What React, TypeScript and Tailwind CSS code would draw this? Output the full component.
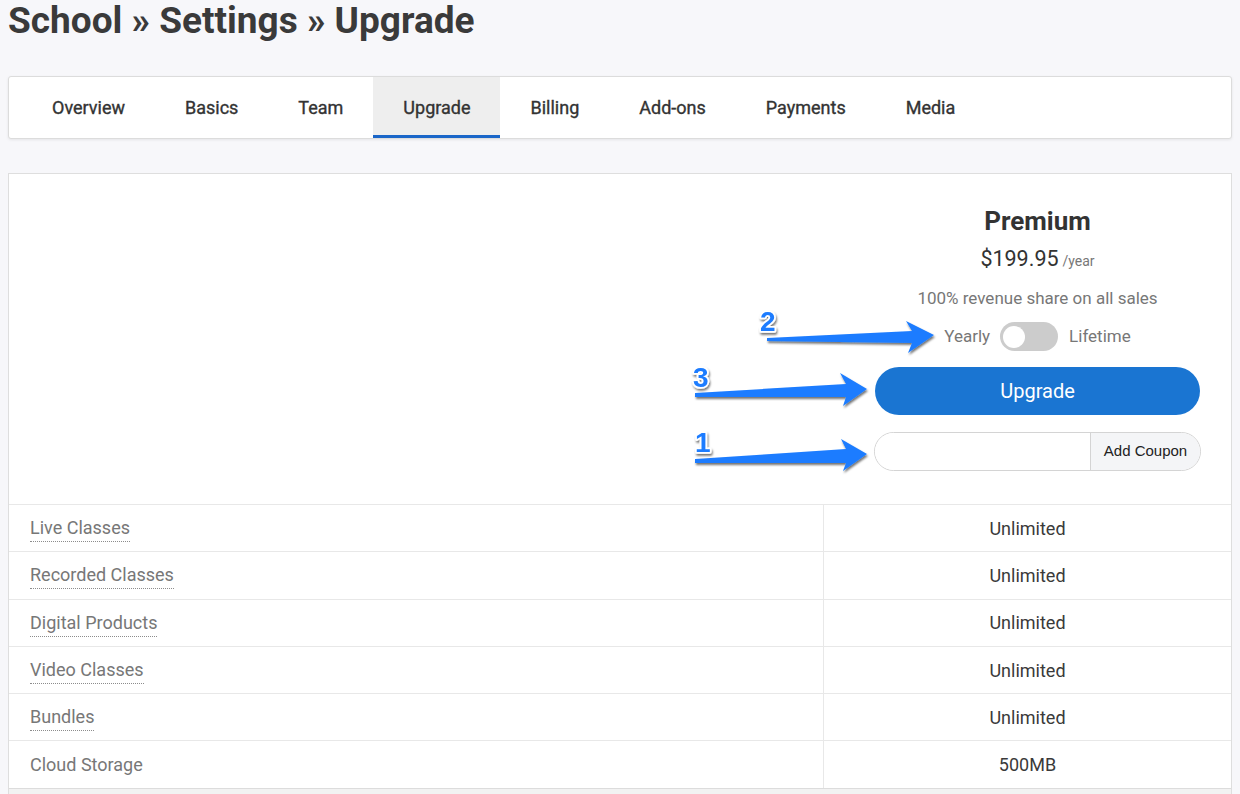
import { useState } from 'react'

const tabs = ['Overview', 'Basics', 'Team', 'Upgrade', 'Billing', 'Add-ons', 'Payments', 'Media']

const features = [
  { name: 'Live Classes', value: 'Unlimited', tip: true },
  { name: 'Recorded Classes', value: 'Unlimited', tip: true },
  { name: 'Digital Products', value: 'Unlimited', tip: true },
  { name: 'Video Classes', value: 'Unlimited', tip: true },
  { name: 'Bundles', value: 'Unlimited', tip: true },
  { name: 'Cloud Storage', value: '500MB', tip: false },
]

// annotation arrows drawn over the screenshot
function Annotations() {
  return (
    <svg
      className="pointer-events-none absolute left-0 top-0"
      width="1240"
      height="794"
      viewBox="0 0 1240 794"
    >
      <defs>
        <filter id="sh" x="-10%" y="-30%" width="120%" height="160%">
          <feDropShadow dx="1" dy="2" stdDeviation="1.2" floodColor="#000" floodOpacity="0.55" />
        </filter>
      </defs>
      <g fill="#1c7cff" filter="url(#sh)">
        <path d="M767,338 L912,331 L906,321 L934,335 L908,353 L912,343 L767,341 Z" />
        <path d="M695,393 L846,384 L840,373 L867,389 L843,406 L846,397 L695,397 Z" />
        <path d="M695,459 L846,449 L841,439 L867,454 L843,471 L846,463 L695,463 Z" />
      </g>
      <g
        fill="#1c7cff"
        stroke="#fff"
        strokeWidth="3.5"
        strokeLinejoin="round"
        filter="url(#sh)"
        style={{ paintOrder: 'stroke', fontFamily: '"Liberation Sans", Arial, sans-serif' }}
        fontWeight="bold"
        fontSize="28"
      >
        <text x="760" y="331">2</text>
        <text x="693" y="387">3</text>
        <text x="695" y="452">1</text>
      </g>
    </svg>
  )
}

export default function App() {
  const [lifetime, setLifetime] = useState(false)
  const [coupon, setCoupon] = useState('')

  return (
    <div
      className="relative min-h-screen bg-[#f7f7fa] px-2 text-[#333]"
      style={{ fontFamily: 'Roboto, "Liberation Sans", sans-serif' }}
    >
      <h1 className="pt-[2px] text-[37px] font-bold leading-none text-[#3a3a3a]">
        School » Settings » Upgrade
      </h1>

      {/* Tabs */}
      <nav className="mt-[37px] flex rounded-[3px] border border-[#dcdcdc] bg-white pl-[13px] shadow-[0_1px_3px_rgba(0,0,0,0.08)]">
        {tabs.map((t) => {
          const active = t === 'Upgrade'
          return (
            <a
              key={t}
              className={`flex h-[61px] items-center border-b-[3px] px-[30px] pt-[3px] text-[18px] text-[#333] [-webkit-text-stroke:0.35px_#333] ${
                active ? 'border-[#1a66c8] bg-[#eeeeee]' : 'border-transparent'
              }`}
            >
              {t}
            </a>
          )
        })}
      </nav>

      {/* Plan card */}
      <div className="mt-[34px] border border-[#dedede] bg-white">
        <div className="flex h-[330px] justify-end pr-[30px]">
          <div className="flex w-[327px] flex-col items-center pt-[32px]">
            <div className="text-[26px] font-bold leading-[30px] text-[#333]">Premium</div>
            <div className="mt-[8px] leading-[30px]">
              <span className="text-[21.5px] text-[#333]">$199.95</span>{' '}
              <span className="text-[14px] text-[#777]">/year</span>
            </div>
            <div className="mt-[10px] text-[17px] leading-[24px] text-[#777]">
              100% revenue share on all sales
            </div>
            <div className="mt-[12px] flex h-[29px] items-center gap-[10px] text-[17px] text-[#777]">
              <span>Yearly</span>
              <button
                type="button"
                onClick={() => setLifetime((v) => !v)}
                className={`flex h-[29px] w-[58px] items-center rounded-full px-[3px] ${
                  lifetime ? 'justify-end bg-[#1976d2]' : 'justify-start bg-[#cccccc]'
                }`}
              >
                <span className="h-[22px] w-[22px] rounded-full bg-white" />
              </button>
              <span className="ml-px">Lifetime</span>
            </div>
            <button
              type="button"
              className="mt-[16px] h-[48px] w-[325px] rounded-full bg-[#1a75d2] text-[20px] text-white"
            >
              Upgrade
            </button>
            <div className="mt-[17px] flex h-[39px] w-[327px] overflow-hidden rounded-full border border-[#d4d4d4]">
              <input
                value={coupon}
                onChange={(e) => setCoupon(e.target.value)}
                className="min-w-0 flex-1 bg-white px-4 text-[15px] outline-none"
              />
              <button
                type="button"
                className="w-[110px] border-l border-[#d4d4d4] bg-[#f4f5f7] text-[15px] text-[#222]"
                style={{ fontFamily: '"Liberation Sans", Arial, sans-serif' }}
              >
                Add Coupon
              </button>
            </div>
          </div>
        </div>

        {features.map((f) => (
          <div key={f.name} className="grid h-[47.3px] grid-cols-[814px_1fr] border-t border-[#e8e8e8] text-[18px]">
            <div className="flex items-center pl-[21px] text-[#777]">
              <span className={f.tip ? 'border-b border-dotted border-[#8c8c8c]' : ''}>{f.name}</span>
            </div>
            <div className="flex items-center justify-center border-l border-[#e8e8e8] text-[#3a3a3a]">
              {f.value}
            </div>
          </div>
        ))}
        <div className="h-[47px] border-t border-[#dcdcdc] bg-[#f2f2f2]" />
      </div>

      <Annotations />
    </div>
  )
}
